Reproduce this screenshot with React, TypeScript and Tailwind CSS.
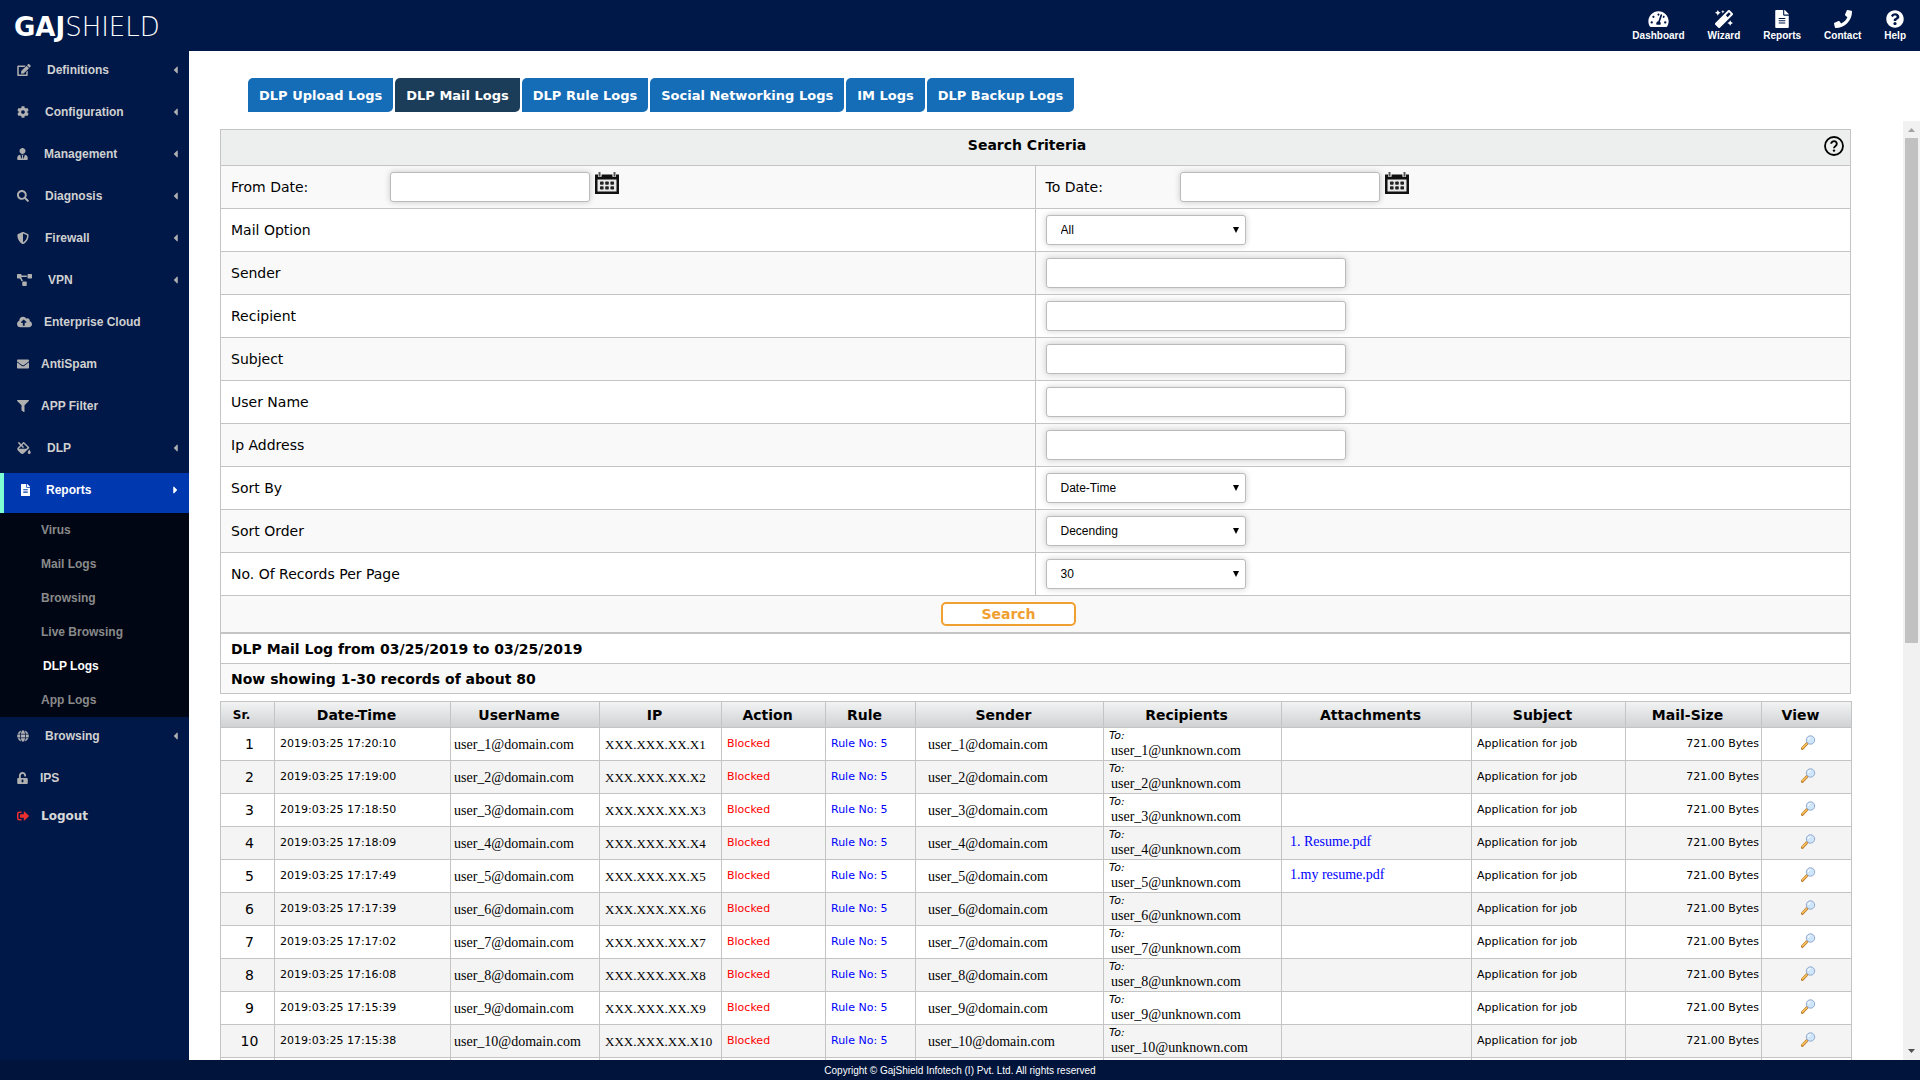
import type { ReactNode } from "react";
import type { IconType } from "react-icons";
import {
  FaCaretLeft,
  FaCaretRight,
  FaCloudUploadAlt,
  FaCog,
  FaEdit,
  FaEnvelope,
  FaFileAlt,
  FaFillDrip,
  FaFilter,
  FaGlobe,
  FaMagic,
  FaPhone,
  FaProjectDiagram,
  FaQuestionCircle,
  FaSearch,
  FaShieldAlt,
  FaSignOutAlt,
  FaTachometerAlt,
  FaUnlockAlt,
  FaUserTie,
} from "react-icons/fa";

interface MenuItem {
  label: string;
  icon: IconType;
  size: string;
  gap: string;
  caret?: boolean;
}

const topLinks: { label: string; icon: IconType; size: string }[] = [
  { label: "Dashboard", icon: FaTachometerAlt, size: "w-[21px]" },
  { label: "Wizard", icon: FaMagic, size: "w-[18px]" },
  { label: "Reports", icon: FaFileAlt, size: "w-[14px]" },
  { label: "Contact", icon: FaPhone, size: "w-[18px]" },
  { label: "Help", icon: FaQuestionCircle, size: "w-[18px]" },
];

const menuBefore: MenuItem[] = [
  { label: "Definitions", icon: FaEdit, size: "w-[14px]", gap: "gap-4", caret: true },
  { label: "Configuration", icon: FaCog, size: "w-3", gap: "gap-4", caret: true },
  { label: "Management", icon: FaUserTie, size: "w-[11px]", gap: "gap-4", caret: true },
  { label: "Diagnosis", icon: FaSearch, size: "w-3", gap: "gap-4", caret: true },
  { label: "Firewall", icon: FaShieldAlt, size: "w-3", gap: "gap-4", caret: true },
  { label: "VPN", icon: FaProjectDiagram, size: "w-[15px]", gap: "gap-4", caret: true },
  { label: "Enterprise Cloud", icon: FaCloudUploadAlt, size: "w-[15px]", gap: "gap-3" },
  { label: "AntiSpam", icon: FaEnvelope, size: "w-3", gap: "gap-3" },
  { label: "APP Filter", icon: FaFilter, size: "w-3", gap: "gap-3" },
  { label: "DLP", icon: FaFillDrip, size: "w-[14px]", gap: "gap-4", caret: true },
];

const menuAfter: MenuItem[] = [
  { label: "Browsing", icon: FaGlobe, size: "w-3", gap: "gap-4", caret: true },
  { label: "IPS", icon: FaUnlockAlt, size: "w-[11px]", gap: "gap-3" },
];

const reportLinks = [
  "Virus",
  "Mail Logs",
  "Browsing",
  "Live Browsing",
  "DLP Logs",
  "App Logs",
];

const tabs = [
  "DLP Upload Logs",
  "DLP Mail Logs",
  "DLP Rule Logs",
  "Social Networking Logs",
  "IM Logs",
  "DLP Backup Logs",
];

const logs = [
  { time: "17:20:10" },
  { time: "17:19:00" },
  { time: "17:18:50" },
  { time: "17:18:09", attachment: "1. Resume.pdf" },
  { time: "17:17:49", attachment: "1.my resume.pdf" },
  { time: "17:17:39" },
  { time: "17:17:02" },
  { time: "17:16:08" },
  { time: "17:15:39" },
  { time: "17:15:38" },
];

const columns = [
  { label: "Sr.", width: "w-[54px]" },
  { label: "Date-Time", width: "w-[176px]" },
  { label: "UserName", width: "w-[149px]" },
  { label: "IP", width: "w-[122px]" },
  { label: "Action", width: "w-[104px]" },
  { label: "Rule", width: "w-[90px]" },
  { label: "Sender", width: "w-[188px]" },
  { label: "Recipients", width: "w-[178px]" },
  { label: "Attachments", width: "w-[190px]" },
  { label: "Subject", width: "w-[154px]" },
  { label: "Mail-Size", width: "w-[136px]" },
  { label: "View", width: "w-[90px]" },
];

const fieldClass =
  "h-[30px] rounded-[3px] border border-[#bbb] bg-white shadow-[0_0_6px_rgba(0,0,0,0.2)] outline-none";

function SidebarLink({ item }: { item: MenuItem }) {
  const Icon = item.icon;
  return (
    <a
      href="#"
      className={`mt-[2px] flex h-10 items-center pr-[11px] pb-[6px] pl-[17px] text-[#d0d0d0] ${item.gap}`}
    >
      <Icon className={`h-3 shrink-0 text-[#b0b0b0] ${item.size}`} />
      <span className="flex-1">{item.label}</span>
      {item.caret && <FaCaretLeft className="h-3 w-[5px] text-[#b0b0b0]" />}
    </a>
  );
}

function Sidebar() {
  return (
    <nav className="w-[189px] shrink-0 overflow-hidden bg-[#001848] font-['Liberation_Sans',sans-serif] text-xs font-bold">
      {menuBefore.map((item) => (
        <SidebarLink key={item.label} item={item} />
      ))}

      <a
        href="#"
        className="mt-[2px] flex h-10 items-center gap-4 border-l-4 border-[#7fffd4] bg-[#0038b0] pr-[11px] pb-[6px] pl-[17px] text-white"
      >
        <FaFileAlt className="h-3 w-[9px]" />
        <span className="flex-1">Reports</span>
        <FaCaretRight className="h-3 w-[5px]" />
      </a>
      <div className="bg-[#000614]">
        {reportLinks.map((label) => (
          <a
            key={label}
            href="#"
            className={
              label === "DLP Logs"
                ? "flex h-[34px] items-center pl-[43px] text-white"
                : "flex h-[34px] items-center pl-[41px] text-[#8a8a8a]"
            }
          >
            {label}
          </a>
        ))}
      </div>

      {menuAfter.map((item) => (
        <SidebarLink key={item.label} item={item} />
      ))}
      <a
        href="#"
        className="flex h-9 items-center gap-3 pb-[6px] pl-[17px] font-['DejaVu_Sans',sans-serif] text-[#d8d8d8]"
      >
        <FaSignOutAlt className="h-3 w-3 text-[#ee2f2f]" />
        Logout
      </a>
    </nav>
  );
}

function CalendarIcon() {
  return (
    <svg viewBox="0 0 24 22" className="h-[22px] w-6">
      <path
        d="M0 2.500h3v2.200h3.600v-2.200h10.800v2.200h3.600v-2.200h3v19.500h-24z"
        fill="#111"
      />
      <path d="M2.500 7.500h19v12h-19z" fill="#e8e8e8" />
      <path
        d="M4.500 0.500v3M19.500 0.500v3"
        stroke="#555"
        strokeWidth="2"
        strokeLinecap="round"
      />
      <g fill="#222">
        <rect x="5" y="9.500" width="3.600" height="3.200" rx="0.800" />
        <rect x="10.200" y="9.500" width="3.600" height="3.200" rx="0.800" />
        <rect x="15.400" y="9.500" width="3.600" height="3.200" rx="0.800" />
        <rect x="5" y="14.300" width="3.600" height="3.200" rx="0.800" />
        <rect x="10.200" y="14.300" width="3.600" height="3.200" rx="0.800" />
        <rect x="15.400" y="14.300" width="3.600" height="3.200" rx="0.800" />
      </g>
    </svg>
  );
}

function HelpIcon() {
  return (
    <svg viewBox="0 0 20 20" className="size-5" fill="none" stroke="#000">
      <circle cx="10" cy="10" r="9" strokeWidth="1.800" />
      <path
        d="M7.200 7.800a2.800 2.600 0 1 1 4.400 2.100c-1 .7-1.600 1.100-1.600 2.300"
        strokeWidth="1.900"
      />
      <circle cx="10" cy="14.600" r="1.200" fill="#000" stroke="none" />
    </svg>
  );
}

function LensIcon() {
  return (
    <svg viewBox="0 0 15 15" className="size-[15px]">
      <path
        d="M1.300 13.400L6 8.600"
        stroke="#b9772a"
        strokeWidth="2.800"
        strokeLinecap="round"
      />
      <path
        d="M1.500 12.900L5.700 8.700"
        stroke="#f7c25c"
        strokeWidth="1.500"
        strokeLinecap="round"
      />
      <circle cx="9.500" cy="5" r="4.200" fill="#cfe6fa" stroke="#92a9cf" />
      <path d="M7.200 5a2.400 2.400 0 0 1 2.400-2.400" fill="none" stroke="#fff" />
    </svg>
  );
}

function DateField({
  id,
  label,
  labelWidth,
}: {
  id: string;
  label: string;
  labelWidth: string;
}) {
  return (
    <div className="flex pt-[6px] pl-[10px]">
      <label htmlFor={id} className={`leading-[30px] ${labelWidth}`}>
        {label}
      </label>
      <input id={id} type="text" className={`w-[200px] ${fieldClass}`} />
      <button type="button" aria-label="Pick a date" className="ml-[5px] h-[22px]">
        <CalendarIcon />
      </button>
    </div>
  );
}

function FormRow({
  id,
  label,
  children,
}: {
  id: string;
  label: string;
  children: ReactNode;
}) {
  return (
    <div className="grid h-[43px] grid-cols-[calc(50%-1px)_1fr] border-b border-[#c4c4c4] odd:bg-white even:bg-[#f9f9f9]">
      <label htmlFor={id} className="pt-[6px] pl-[10px] leading-[30px]">
        {label}
      </label>
      <div className="border-l border-[#c4c4c4] pt-[6px] pl-[10px]">
        {children}
      </div>
    </div>
  );
}

function TextRow({ id, label }: { id: string; label: string }) {
  return (
    <FormRow id={id} label={label}>
      <input id={id} type="text" className={`w-[300px] ${fieldClass}`} />
    </FormRow>
  );
}

function SelectRow({
  id,
  label,
  value,
}: {
  id: string;
  label: string;
  value: string;
}) {
  return (
    <FormRow id={id} label={label}>
      <div className="relative w-[200px]">
        <select
          id={id}
          className={`block w-full appearance-none pl-[14px] font-['Liberation_Sans',sans-serif] text-xs ${fieldClass}`}
        >
          <option>{value}</option>
        </select>
        <svg
          viewBox="0 0 6 6"
          className="pointer-events-none absolute top-3 right-[7px] size-[6px]"
        >
          <path d="M0 0h6L3 6z" />
        </svg>
      </div>
    </FormRow>
  );
}

function SearchForm() {
  return (
    <form
      className="border border-[#c4c4c4] border-b-0 text-sm"
      onSubmit={(e) => e.preventDefault()}
    >
      <div className="flex h-9 border-b border-[#c4c4c4] bg-[#edefee] pt-[5px]">
        <h1 className="flex-1 pl-[9px] text-center font-bold">Search Criteria</h1>
        <button type="button" aria-label="Help" className="mt-px mr-[6px] size-5">
          <HelpIcon />
        </button>
      </div>
      <div className="grid h-[43px] grid-cols-[calc(50%-1px)_1fr] border-b border-[#c4c4c4] bg-[#f9f9f9]">
        <DateField id="from" label="From Date:" labelWidth="w-[159px]" />
        <div className="border-l border-[#c4c4c4]">
          <DateField id="to" label="To Date:" labelWidth="w-[134px]" />
        </div>
      </div>
      <div>
        <SelectRow id="option" label="Mail Option" value="All" />
        <TextRow id="sender" label="Sender" />
        <TextRow id="recipient" label="Recipient" />
        <TextRow id="subject" label="Subject" />
        <TextRow id="user" label="User Name" />
        <TextRow id="ip" label="Ip Address" />
        <SelectRow id="sort" label="Sort By" value="Date-Time" />
        <SelectRow id="order" label="Sort Order" value="Decending" />
        <SelectRow id="count" label="No. Of Records Per Page" value="30" />
      </div>
      <div className="flex h-[38px] justify-center border-b-2 border-[#c4c4c4] bg-[#f9f9f9] pt-[6px] pr-[54px]">
        <button
          type="submit"
          className="h-6 w-[135px] rounded-[5px] border-2 border-[#f0a030] bg-white leading-5 font-bold text-[#f0a030]"
        >
          Search
        </button>
      </div>
      <p className="h-[30px] border-b border-[#c4c4c4] pl-[10px] leading-[31px] font-bold">
        DLP Mail Log from 03/25/2019 to 03/25/2019
      </p>
      <p className="h-[30px] border-b border-[#c4c4c4] bg-[#f9f9f9] pl-[10px] leading-[31px] font-bold">
        Now showing 1-30 records of about 80
      </p>
    </form>
  );
}

function LogTable() {
  const serif = "font-['Liberation_Serif',serif] text-sm";
  return (
    <table className="mt-[7px] w-full table-fixed border-collapse text-[11px] leading-4 [&_td]:border [&_td]:border-[#c4c4c4] [&_th]:border [&_th]:border-[#c4c4c4]">
      <thead>
        <tr className="h-[26px] bg-linear-to-b from-[#f2f3f3] to-[#cfd0d2]">
          {columns.map((col) => (
            <th
              key={col.label}
              className={`pr-3 ${col.width} ${col.label === "Sr." ? "text-xs" : "text-sm"}`}
            >
              {col.label}
            </th>
          ))}
        </tr>
      </thead>
      <tbody className="[&_tr]:h-[33px]">
        {logs.map((log, i) => {
          const n = i + 1;
          return (
            <tr key={n} className="even:bg-[#f4f4f4]">
              <td className="pl-1 text-center text-sm">{n}</td>
              <td className="pl-[5px]">2019:03:25 {log.time}</td>
              <td className={`pt-[2px] pl-[3px] ${serif}`}>
                user_{n}@domain.com
              </td>
              <td className="pt-[2px] pl-[5px] font-['Liberation_Serif',serif] text-[13px]">
                XXX.XXX.XX.X{n}
              </td>
              <td className="pl-[5px] text-[#f00]">Blocked</td>
              <td className="pl-[5px]">
                <a href="#" className="text-[#00f]">
                  Rule No: 5
                </a>
              </td>
              <td className={`pt-[2px] pl-3 ${serif}`}>user_{n}@domain.com</td>
              <td>
                <div className="h-[14px] pl-[5px] leading-[14px] italic">To:</div>
                <div className={`h-4 pl-[7px] leading-4 ${serif}`}>
                  user_{n}@unknown.com
                </div>
              </td>
              <td className={`pb-[2px] pl-2 ${serif}`}>
                {log.attachment && (
                  <a href="#" className="text-[#00f]">
                    {log.attachment}
                  </a>
                )}
              </td>
              <td className="pl-[5px]">Application for job</td>
              <td className="pr-[2px] text-right">721.00 Bytes</td>
              <td>
                <a href="#" aria-label="View" className="flex justify-center pb-1 pl-1">
                  <LensIcon />
                </a>
              </td>
            </tr>
          );
        })}
        <tr>
          {columns.map((col) => (
            <td key={col.label} />
          ))}
        </tr>
      </tbody>
    </table>
  );
}

function ScrollTrack() {
  return (
    <div className="flex w-[17px] shrink-0 flex-col items-center bg-[#f1f1f1]">
      <svg viewBox="0 0 17 17" className="size-[17px]">
        <path d="M5 11l3.500-4 3.500 4z" fill="#a3a3a3" />
      </svg>
      <div className="w-[13px] grow-[505] bg-[#c1c1c1]" />
      <div className="grow-[400]" />
      <svg viewBox="0 0 17 17" className="size-[17px]">
        <path d="M5 6l3.500 4 3.500-4z" fill="#505050" />
      </svg>
    </div>
  );
}

export default function App() {
  return (
    <div className="flex h-screen flex-col bg-white font-['DejaVu_Sans',sans-serif] text-black">
      <header className="flex h-[51px] shrink-0 items-start justify-between bg-[#001848] pr-[14px] pl-[14px] text-white">
        <a href="#" className="pt-[11px] text-[26px] leading-8">
          <span className="font-bold">GAJ</span>
          <span className="font-extralight">SHIELD</span>
        </a>
        <nav className="flex gap-[23px] pt-[10px] font-['Liberation_Sans',sans-serif] text-[10px] font-bold">
          {topLinks.map(({ label, icon: Icon, size }) => (
            <a key={label} href="#" className="flex flex-col items-center">
              <Icon className={`h-[18px] ${size}`} />
              <span className="leading-4">{label}</span>
            </a>
          ))}
        </nav>
      </header>

      <div className="flex min-h-0 flex-1">
        <Sidebar />
        <main className="flex min-w-0 flex-1 flex-col">
          <div className="flex h-[70px] shrink-0 gap-[2px] pt-[27px] pl-[59px]">
            {tabs.map((tab) => (
              <button
                key={tab}
                type="button"
                className={`h-[34px] rounded-tl-[5px] rounded-br-[5px] px-[11px] pt-[2px] text-[13px] font-bold text-white ${
                  tab === "DLP Mail Logs" ? "bg-[#1c3d5a]" : "bg-[#156cb7]"
                }`}
              >
                {tab}
              </button>
            ))}
          </div>
          <div className="flex min-h-0 flex-1">
            <div className="min-w-0 flex-1 overflow-y-auto pt-2 pr-[52px] pl-[31px] [scrollbar-width:none]">
              <SearchForm />
              <LogTable />
            </div>
            <ScrollTrack />
          </div>
        </main>
      </div>

      <footer className="h-5 shrink-0 bg-[#00143c] pt-[2px] text-center font-['Liberation_Sans',sans-serif] text-[10px] leading-[18px] text-white">
        Copyright © GajShield Infotech (I) Pvt. Ltd. All rights reserved
      </footer>
    </div>
  );
}
